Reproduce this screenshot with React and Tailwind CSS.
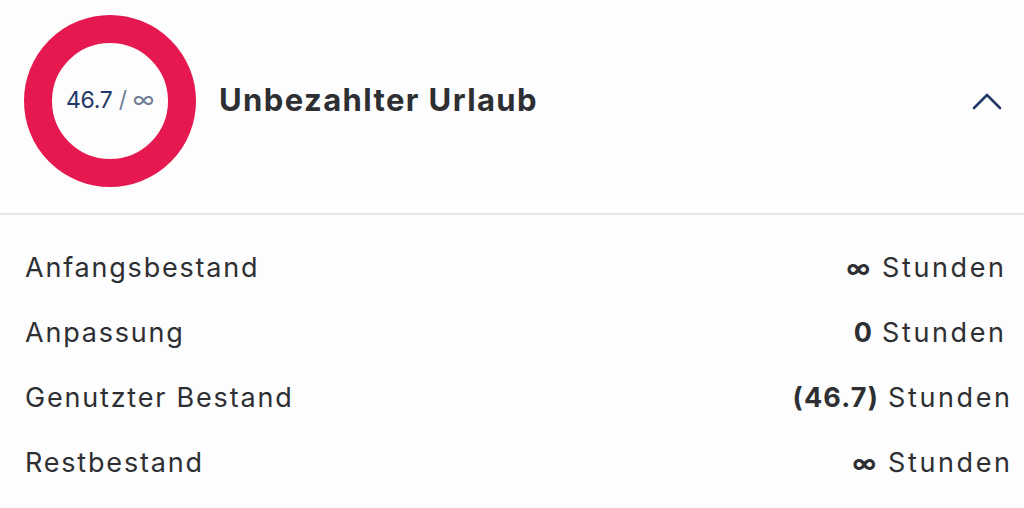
import React from "react";

const rows = [
  { label: "Anfangsbestand", value: "∞", inf: true, pr: "pr-[20px]" },
  { label: "Anpassung", value: "0", inf: false, pr: "pr-[20px]" },
  { label: "Genutzter Bestand", value: "(46.7)", inf: false, pr: "pr-[14px]" },
  { label: "Restbestand", value: "∞", inf: true, pr: "pr-[14px]" },
];

export default function App() {
  return (
    <div className="w-[1024px] h-[508px] bg-[#fdfdfd] overflow-hidden font-['Inter',sans-serif] text-[#2e2f33]">
      <div className="flex items-center h-[213px] pl-[24px] pr-[22px] pb-[12px]">
        <div className="w-[172px] h-[172px] shrink-0 rounded-full border-[28px] border-[#e5194f] flex items-center justify-center">
          <span className="text-[23px] leading-none text-[#1f3a66] tracking-[-0.3px]">
            46.7 <span className="text-[#6f7e95]">/ ∞</span>
          </span>
        </div>
        <h1 className="ml-[23px] text-[31px] font-bold tracking-[1.4px] text-[#2e2f33]">Unbezahlter Urlaub</h1>
        <div className="ml-auto flex">
          <svg width="30" height="18" viewBox="0 0 30 18" fill="none">
            <path d="M2 16 L15 3 L28 16" stroke="#1f3a66" strokeWidth="2.6" strokeLinecap="round" strokeLinejoin="round" />
          </svg>
        </div>
      </div>
      <div className="h-[2px] bg-[#e6e7ea]" />
      <div className="pt-[21px]">
        {rows.map((r) => (
          <div key={r.label} className={`flex items-center justify-between h-[65px] pl-[25px] ${r.pr}`}>
            <span className="text-[27px] tracking-[1.8px]">{r.label}</span>
            <span className="text-[27px] flex items-baseline">
              <span className={r.inf ? "font-bold text-[24px] mr-[12px]" : "font-bold tracking-[1.2px] mr-[9px]"}>{r.value}</span>
              <span className="tracking-[2.6px] mr-[-2.6px]">Stunden</span>
            </span>
          </div>
        ))}
      </div>
    </div>
  );
}
